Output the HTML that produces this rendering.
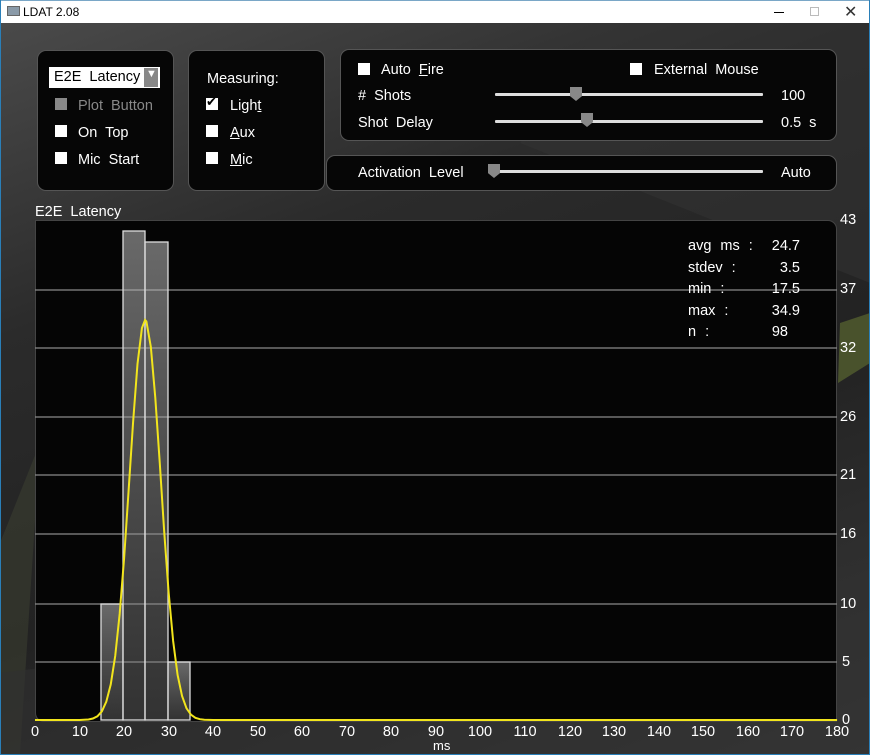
<!DOCTYPE html>
<html><head><meta charset="utf-8"><style>
*{margin:0;padding:0;box-sizing:border-box}
body{width:870px;height:755px;overflow:hidden;font-family:"Liberation Sans","DejaVu Sans",sans-serif;color:#fff;font-size:14.5px;word-spacing:4px;position:relative;background:#2a2a2a}
.bg{position:absolute;left:0;top:23px;width:870px;height:732px;background:linear-gradient(160deg,#4a4a4a 0%,#2b2b2b 30%,#222 60%,#3a3a3a 100%);overflow:hidden}
.title{position:absolute;left:0;top:0;width:870px;height:23px;background:#fff;color:#000;font-size:12px;word-spacing:0;border-top:1px solid #7aa7c7}
.panel{position:absolute;background:#060606;border:1px solid #555;border-radius:9px}
.t{position:absolute;white-space:nowrap;margin-top:2px}
.cb{position:absolute;width:12px;height:12px;background:#fff}
.u{text-decoration:underline}
.track{position:absolute;height:3px;background:#ddd;border-radius:1px}
.thumb{position:absolute;width:12px;height:14px;background:#888;clip-path:polygon(0 0,100% 0,100% 65%,50% 100%,0 65%)}
.yl{position:absolute;left:840px;font-size:14.5px;word-spacing:0;margin-top:1px}
.xl{position:absolute;top:724px;font-size:14.5px;width:30px;text-align:center;word-spacing:0}
</style></head><body>
<div class="bg">
<svg width="870" height="732" style="position:absolute;left:0;top:0">
<polygon points="600,0 870,0 870,260 520,120" fill="#333" opacity=".5"/>
<polygon points="0,520 40,420 20,732 0,732" fill="#3a3d30" opacity=".6"/>
<polygon points="840,300 870,290 870,340 838,360" fill="#5a6630" opacity=".7"/>
<polygon points="0,650 870,540 870,732 0,732" fill="#303030" opacity=".6"/>
</svg>
</div>
<div class="title"><div style="position:absolute;left:7px;top:5px;width:13px;height:10px;background:#8a9aa8;border:1px solid #666"></div><span style="position:absolute;left:23px;top:4px">LDAT 2.08</span>
<div style="position:absolute;left:774px;top:11px;width:10px;height:1px;background:#000"></div>
<div style="position:absolute;left:810px;top:6px;width:9px;height:9px;border:1px solid #bbb"></div>
<span style="position:absolute;left:844px;top:1px;font-size:16px;color:#333">✕</span></div>

<div class="panel" style="left:37px;top:50px;width:137px;height:141px"></div>
<div style="position:absolute;left:49px;top:67px;width:111px;height:21px;background:#fff"></div>
<span class="t" style="left:54px;top:67px;color:#000">E2E Latency</span>
<div style="position:absolute;left:144px;top:68px;width:14px;height:19px;background:#888"></div>
<span class="t" style="left:146px;top:66px;font-size:11px;color:#fff">▼</span>
<div class="cb" style="left:55px;top:98px;background:#888"></div><span class="t" style="left:78px;top:96px;color:#888">Plot Button</span>
<div class="cb" style="left:55px;top:125px"></div><span class="t" style="left:78px;top:123px">On Top</span>
<div class="cb" style="left:55px;top:152px"></div><span class="t" style="left:78px;top:150px">Mic Start</span>

<div class="panel" style="left:188px;top:50px;width:137px;height:141px"></div>
<span class="t" style="left:207px;top:69px">Measuring:</span>
<div class="cb" style="left:206px;top:98px"></div><span class="t" style="left:206px;top:92px;color:#000;font-size:13px;font-weight:bold">✔</span><span class="t" style="left:230px;top:96px">Ligh<span class="u">t</span></span>
<div class="cb" style="left:206px;top:125px"></div><span class="t" style="left:230px;top:123px"><span class="u">A</span>ux</span>
<div class="cb" style="left:206px;top:152px"></div><span class="t" style="left:230px;top:150px"><span class="u">M</span>ic</span>

<div class="panel" style="left:340px;top:49px;width:497px;height:92px"></div>
<div class="cb" style="left:358px;top:63px"></div><span class="t" style="left:381px;top:60px">Auto <span class="u">F</span>ire</span>
<div class="cb" style="left:630px;top:63px"></div><span class="t" style="left:654px;top:60px">External Mouse</span>
<span class="t" style="left:358px;top:86px"># Shots</span>
<div class="track" style="left:495px;top:93px;width:268px"></div><div class="thumb" style="left:570px;top:87px"></div>
<span class="t" style="left:781px;top:86px">100</span>
<span class="t" style="left:358px;top:113px">Shot Delay</span>
<div class="track" style="left:495px;top:120px;width:268px"></div><div class="thumb" style="left:581px;top:113px"></div>
<span class="t" style="left:781px;top:113px">0.5 s</span>

<div class="panel" style="left:326px;top:155px;width:511px;height:36px"></div>
<span class="t" style="left:358px;top:163px">Activation Level</span>
<div class="track" style="left:490px;top:170px;width:273px"></div><div class="thumb" style="left:488px;top:164px"></div>
<span class="t" style="left:781px;top:163px">Auto</span>

<span class="t" style="left:35px;top:202px">E2E Latency</span>
<div style="position:absolute;left:35px;top:220px;width:802px;height:502px;background:#050505;border-radius:0 9px 0 9px;border:1px solid #444"></div>
<svg width="870" height="755" style="position:absolute;left:0;top:0">
<defs><linearGradient id="g" x1="0" y1="0" x2="0" y2="1"><stop offset="0" stop-color="#bbb" stop-opacity=".55"/><stop offset="1" stop-color="#777" stop-opacity=".4"/></linearGradient></defs>
<g stroke="#8a8a8a" stroke-width="1.2">
<line x1="35" x2="837" y1="290" y2="290"/><line x1="35" x2="837" y1="348" y2="348"/>
<line x1="35" x2="837" y1="417" y2="417"/><line x1="35" x2="837" y1="475" y2="475"/>
<line x1="35" x2="837" y1="534" y2="534"/><line x1="35" x2="837" y1="604" y2="604"/>
<line x1="35" x2="837" y1="662" y2="662"/>
</g>
<g stroke="#ddd" stroke-width="1.3" fill="url(#g)">
<rect x="101" y="604" width="22" height="116"/>
<rect x="123" y="231" width="22" height="489"/>
<rect x="145" y="242" width="23" height="478"/>
<rect x="168" y="662" width="22" height="58"/>
</g>
<g transform="translate(35,720) scale(4.456,-1)">
<polyline fill="none" stroke="#f2e51c" stroke-width="2" vector-effect="non-scaling-stroke" points="0,0 10,0 12,0.5 13,1.5 14,3.7 15,8.6 16,18.3 17,35.6 18,64 19,106 20,162 21,229 22,297 23,356 24,392 24.7,400 25,398.5 26,373 27,322 28,257 29,188 30,127 31,79 32,45 33,24 34,11.7 35,5.3 36,2.2 37,0.8 38,0.2 40,0 180,0"/>
</g>
</svg>
<div style="position:absolute;left:688px;top:236px;line-height:21.5px;word-spacing:5px">avg ms :<br>stdev :<br>min :<br>max :<br>n :</div>
<div style="position:absolute;left:768px;top:236px;line-height:21.5px;text-align:right;width:32px">24.7<br>3.5<br>17.5<br>34.9<br><span style="position:relative;left:-12px">98</span></div>

<span class="yl" style="top:211px">43</span><span class="yl" style="top:280px">37</span><span class="yl" style="top:339px">32</span><span class="yl" style="top:408px">26</span><span class="yl" style="top:466px">21</span><span class="yl" style="top:525px">16</span><span class="yl" style="top:595px">10</span><span class="yl" style="top:653px;left:842px">5</span><span class="yl" style="top:711px;left:842px">0</span>
<span class="xl" style="left:20px">0</span><span class="xl" style="left:65px">10</span><span class="xl" style="left:109px">20</span><span class="xl" style="left:154px">30</span><span class="xl" style="left:198px">40</span><span class="xl" style="left:243px">50</span><span class="xl" style="left:287px">60</span><span class="xl" style="left:332px">70</span><span class="xl" style="left:376px">80</span><span class="xl" style="left:421px">90</span><span class="xl" style="left:465px">100</span><span class="xl" style="left:510px">110</span><span class="xl" style="left:555px">120</span><span class="xl" style="left:599px">130</span><span class="xl" style="left:644px">140</span><span class="xl" style="left:688px">150</span><span class="xl" style="left:733px">160</span><span class="xl" style="left:777px">170</span><span class="xl" style="left:822px">180</span>
<span class="t" style="left:433px;top:736px;font-size:13px">ms</span>
<div style="position:absolute;left:0;top:0;width:870px;height:755px;border:1px solid #2a7fb8;border-top:none;pointer-events:none"></div>
</body></html>
